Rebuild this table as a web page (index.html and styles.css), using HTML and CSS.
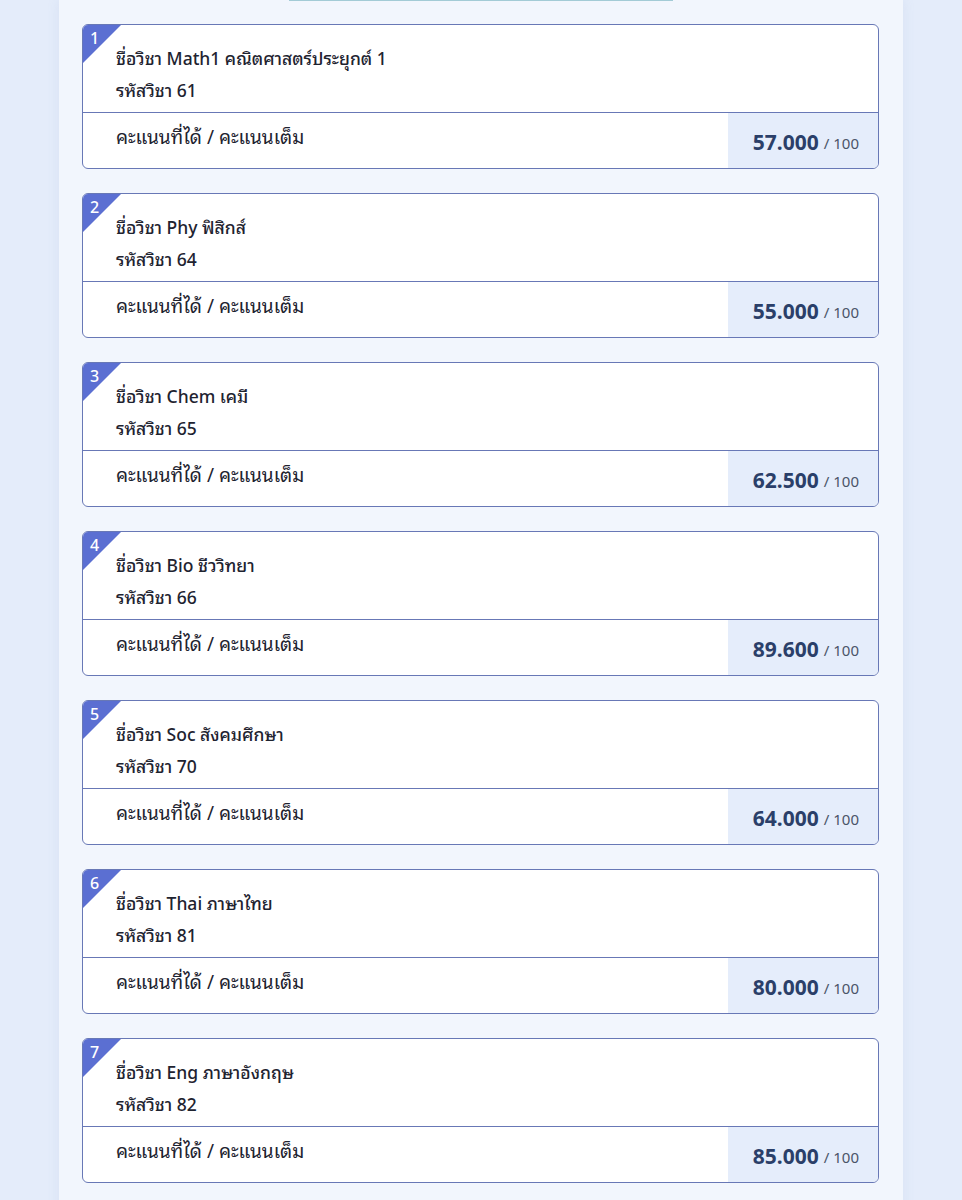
FILE: index.html
```html
<!DOCTYPE html>
<html lang="th">

<head>
  <meta charset="UTF-8">
  <meta name="viewport" content="width=device-width, initial-scale=1.0">
  <title>ผลคะแนน</title>
  <link rel="stylesheet" href="styles.css">
</head>

<body>
  <div class="page">
    <div class="sheet">
      <div class="tab-edge"></div>

      <div class="card">
        <span class="corner"></span><span class="num">1</span>
        <div class="info">
          <p>ชื่อวิชา Math1 คณิตศาสตร์ประยุกต์ 1</p>
          <p>รหัสวิชา 61</p>
        </div>
        <div class="result">
          <div class="label">คะแนนที่ได้ / คะแนนเต็ม</div>
          <div class="score"><b>57.000</b><span>/ 100</span></div>
        </div>
      </div>

      <div class="card">
        <span class="corner"></span><span class="num">2</span>
        <div class="info">
          <p>ชื่อวิชา Phy ฟิสิกส์</p>
          <p>รหัสวิชา 64</p>
        </div>
        <div class="result">
          <div class="label">คะแนนที่ได้ / คะแนนเต็ม</div>
          <div class="score"><b>55.000</b><span>/ 100</span></div>
        </div>
      </div>

      <div class="card">
        <span class="corner"></span><span class="num">3</span>
        <div class="info">
          <p>ชื่อวิชา Chem เคมี</p>
          <p>รหัสวิชา 65</p>
        </div>
        <div class="result">
          <div class="label">คะแนนที่ได้ / คะแนนเต็ม</div>
          <div class="score"><b>62.500</b><span>/ 100</span></div>
        </div>
      </div>

      <div class="card">
        <span class="corner"></span><span class="num">4</span>
        <div class="info">
          <p>ชื่อวิชา Bio ชีววิทยา</p>
          <p>รหัสวิชา 66</p>
        </div>
        <div class="result">
          <div class="label">คะแนนที่ได้ / คะแนนเต็ม</div>
          <div class="score"><b>89.600</b><span>/ 100</span></div>
        </div>
      </div>

      <div class="card">
        <span class="corner"></span><span class="num">5</span>
        <div class="info">
          <p>ชื่อวิชา Soc สังคมศึกษา</p>
          <p>รหัสวิชา 70</p>
        </div>
        <div class="result">
          <div class="label">คะแนนที่ได้ / คะแนนเต็ม</div>
          <div class="score"><b>64.000</b><span>/ 100</span></div>
        </div>
      </div>

      <div class="card">
        <span class="corner"></span><span class="num">6</span>
        <div class="info">
          <p>ชื่อวิชา Thai ภาษาไทย</p>
          <p>รหัสวิชา 81</p>
        </div>
        <div class="result">
          <div class="label">คะแนนที่ได้ / คะแนนเต็ม</div>
          <div class="score"><b>80.000</b><span>/ 100</span></div>
        </div>
      </div>

      <div class="card">
        <span class="corner"></span><span class="num">7</span>
        <div class="info">
          <p>ชื่อวิชา Eng ภาษาอังกฤษ</p>
          <p>รหัสวิชา 82</p>
        </div>
        <div class="result">
          <div class="label">คะแนนที่ได้ / คะแนนเต็ม</div>
          <div class="score"><b>85.000</b><span>/ 100</span></div>
        </div>
      </div>
    </div>
  </div>
</body>

</html>
```

FILE: styles.css
```css
body {
  margin: 0;
  padding: 0;
  background: #e4ecfa;
  font-family: "Noto Sans", "Noto Sans Thai Looped", "Noto Sans Thai", sans-serif;
  color: #1e2330;
}

.page {
  display: flex;
  justify-content: center;
  min-height: 1200px;
}

.sheet {
  width: 844px;
  padding: 0 24px 40px 23px;
  box-sizing: border-box;
  background: #f2f6fd;
  box-shadow: 0 0 12px rgba(120, 150, 200, 0.12);
  display: flex;
  flex-direction: column;
  gap: 24px;
}

.tab-edge {
  align-self: center;
  width: 384px;
  height: 1px;
  background: #a3cbd6;
  margin-bottom: -1px;
}

.card {
  position: relative;
  background: #fff;
  border: 1px solid #6878b6;
  border-radius: 6px;
  overflow: hidden;
}

.corner {
  position: absolute;
  top: 0;
  left: 0;
  width: 0;
  height: 0;
  border-top: 38px solid #5b6fd2;
  border-right: 38px solid transparent;
}

.num {
  position: absolute;
  top: 3px;
  left: 7px;
  color: #fff;
  font-size: 16px;
  font-weight: 500;
  line-height: 20px;
}

.info {
  padding: 17px 33px 6px;
  border-bottom: 1px solid #6878b6;
}

.info p {
  margin: 0;
  font-size: 17.5px;
  font-weight: 500;
  line-height: 32px;
}

.result {
  display: flex;
  height: 55px;
}

.label {
  flex: 1;
  padding: 9px 33px 0;
  font-size: 19px;
  font-weight: 400;
  line-height: 30px;
}

.score {
  width: 150px;
  box-sizing: border-box;
  padding: 2px 19px 0 0;
  background: #e5edfb;
  display: flex;
  justify-content: flex-end;
  align-items: center;
  gap: 5px;
}

.score b {
  font-size: 21px;
  font-weight: 700;
  color: #2b3f69;
}

.score span {
  font-size: 15px;
  color: #4a5468;
  padding-top: 3px;
}
```
